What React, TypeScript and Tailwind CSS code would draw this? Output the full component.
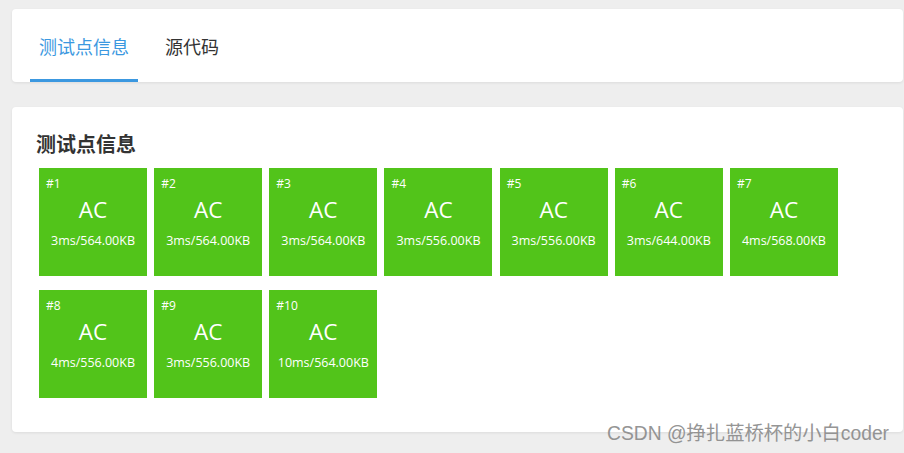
import React from "react";

const cases = [
  { id: 1, t: "3ms/564.00KB" },
  { id: 2, t: "3ms/564.00KB" },
  { id: 3, t: "3ms/564.00KB" },
  { id: 4, t: "3ms/556.00KB" },
  { id: 5, t: "3ms/556.00KB" },
  { id: 6, t: "3ms/644.00KB" },
  { id: 7, t: "4ms/568.00KB" },
  { id: 8, t: "4ms/556.00KB" },
  { id: 9, t: "3ms/556.00KB" },
  { id: 10, t: "10ms/564.00KB" },
];

export default function App() {
  return (
    <div
      className="relative w-[904px] h-[453px] overflow-hidden bg-[#eeeeee] pt-[9px] pl-[12px] pr-[1px]"
      style={{ fontFamily: '"Open Sans", "Noto Sans CJK SC", sans-serif' }}
    >
      <div className="h-[73px] bg-white rounded-[4px] shadow-[0_1px_3px_rgba(0,0,0,0.08)] flex items-end pl-[18px]">
        <div className="flex items-end gap-[27px]">
          <div className="flex flex-col items-center">
            <div className="text-[18px] leading-[24px] text-[#3b98e0] px-[9px] pb-[20px]">测试点信息</div>
            <div className="h-[3px] w-[108px] bg-[#3b98e0]" />
          </div>
          <div className="flex flex-col items-center">
            <div className="text-[18px] leading-[24px] text-[#333333] pb-[23px]">源代码</div>
          </div>
        </div>
      </div>
      <div className="mt-[25px] h-[325px] bg-white rounded-[4px] shadow-[0_1px_3px_rgba(0,0,0,0.08)] pt-[25px] pl-[24px]">
        <div className="text-[20px] leading-[26px] font-bold text-[#333333]">测试点信息</div>
        <div className="mt-[10px] pl-[3px] flex flex-wrap w-[820px] gap-x-[7.17px] gap-y-[14px]">
          {cases.map((c) => (
            <div key={c.id} className="w-[108px] h-[108px] bg-[#52c41a] text-white flex flex-col">
              <div className="text-[12px] leading-[16px] pl-[7px] pt-[8px]">#{c.id}</div>
              <div className="text-[22.5px] leading-[30px] text-center mt-[3px]">AC</div>
              <div className="text-[12.5px] leading-[16px] text-center mt-[8px]">{c.t}</div>
            </div>
          ))}
        </div>
      </div>
      <div
        className="absolute left-[607px] top-[421px] text-[19.3px] leading-[26px] text-[#8a8a8a] opacity-90"
        style={{ fontFamily: '"Liberation Sans", "Noto Sans CJK SC", sans-serif' }}
      >
        CSDN @挣扎蓝桥杯的小白coder
      </div>
    </div>
  );
}
